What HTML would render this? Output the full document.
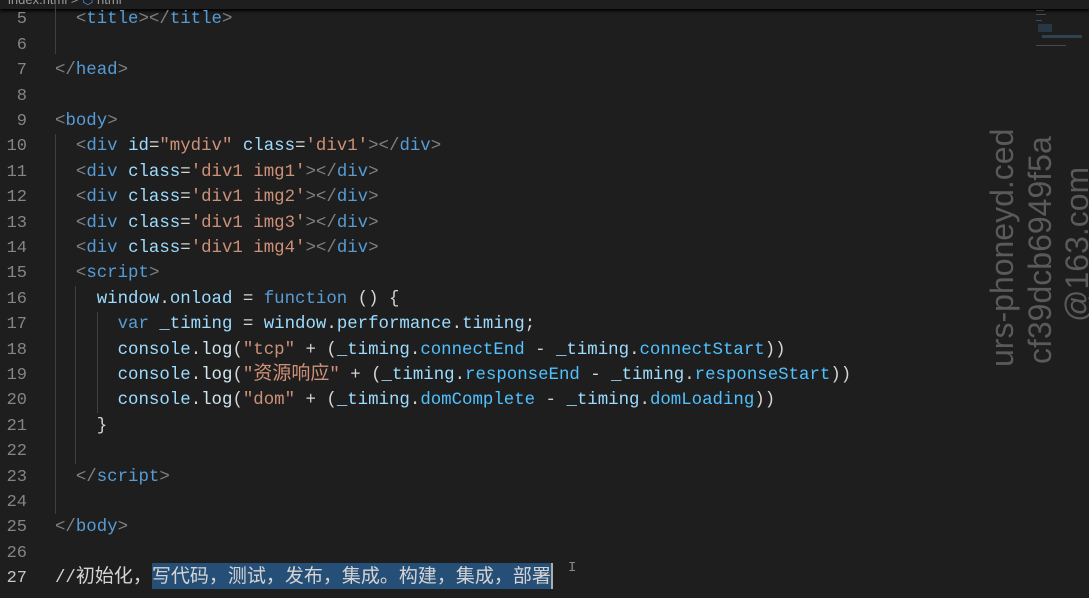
<!DOCTYPE html>
<html><head><meta charset="utf-8"><style>
html,body{margin:0;padding:0;width:1089px;height:598px;overflow:hidden;background:#1e1e1e;}
.ln{position:absolute;left:0;width:27px;text-align:right;color:#858585;font:17px "Liberation Mono",monospace;height:25.4px;line-height:25.4px;margin-top:3px;}
.c{position:absolute;left:55px;white-space:pre;color:#d4d4d4;font:17.4px "Liberation Mono","Noto Sans CJK SC",monospace;height:25.4px;line-height:25.4px;margin-top:3px;}
.z{font-family:"Noto Sans CJK SC",sans-serif;font-size:19px;line-height:10px;}
.b{color:#808080}.t{color:#569cd6}.a{color:#9cdcfe}.s{color:#ce9178}.p{color:#4fc1ff}.k{color:#569cd6}.v{color:#9cdcfe}.f{color:#cfe6ee}
.g{position:absolute;width:1px;background:#404040;}
.wm{position:absolute;color:#5a5a5a;font:32px "Liberation Sans",sans-serif;transform:rotate(-90deg);transform-origin:left top;white-space:nowrap;}
</style></head><body>
<div style="position:absolute;left:0;top:0;width:1089px;height:9px;background:#1e1e1e;box-shadow:0 2px 3px #000;"></div>
<div style="position:absolute;left:8px;top:-8px;color:#999;font:13px 'Liberation Sans';">index.html &gt; <span style="color:#4a8ad6">⬡</span> html</div>
<div class="g" style="left:55px;top:4px;height:50px"></div>
<div class="g" style="left:55px;top:134px;height:380px"></div>
<div class="g" style="left:75px;top:286px;height:178px"></div>
<div class="g" style="left:97px;top:312px;height:101px"></div>

<div class="ln" style="top:4.3px">5</div><div class="c" style="top:4.3px">  <span class="b">&lt;</span><span class="t">title</span><span class="b">&gt;&lt;/</span><span class="t">title</span><span class="b">&gt;</span></div>
<div class="ln" style="top:29.7px">6</div>
<div class="ln" style="top:55.1px">7</div><div class="c" style="top:55.1px"><span class="b">&lt;/</span><span class="t">head</span><span class="b">&gt;</span></div>
<div class="ln" style="top:80.5px">8</div>
<div class="ln" style="top:105.9px">9</div><div class="c" style="top:105.9px"><span class="b">&lt;</span><span class="t">body</span><span class="b">&gt;</span></div>
<div class="ln" style="top:131.3px">10</div><div class="c" style="top:131.3px">  <span class="b">&lt;</span><span class="t">div</span> <span class="a">id</span>=<span class="s">"mydiv"</span> <span class="a">class</span>=<span class="s">'div1'</span><span class="b">&gt;&lt;/</span><span class="t">div</span><span class="b">&gt;</span></div>
<div class="ln" style="top:156.7px">11</div><div class="c" style="top:156.7px">  <span class="b">&lt;</span><span class="t">div</span> <span class="a">class</span>=<span class="s">'div1 img1'</span><span class="b">&gt;&lt;/</span><span class="t">div</span><span class="b">&gt;</span></div>
<div class="ln" style="top:182.1px">12</div><div class="c" style="top:182.1px">  <span class="b">&lt;</span><span class="t">div</span> <span class="a">class</span>=<span class="s">'div1 img2'</span><span class="b">&gt;&lt;/</span><span class="t">div</span><span class="b">&gt;</span></div>
<div class="ln" style="top:207.5px">13</div><div class="c" style="top:207.5px">  <span class="b">&lt;</span><span class="t">div</span> <span class="a">class</span>=<span class="s">'div1 img3'</span><span class="b">&gt;&lt;/</span><span class="t">div</span><span class="b">&gt;</span></div>
<div class="ln" style="top:232.9px">14</div><div class="c" style="top:232.9px">  <span class="b">&lt;</span><span class="t">div</span> <span class="a">class</span>=<span class="s">'div1 img4'</span><span class="b">&gt;&lt;/</span><span class="t">div</span><span class="b">&gt;</span></div>
<div class="ln" style="top:258.3px">15</div><div class="c" style="top:258.3px">  <span class="b">&lt;</span><span class="t">script</span><span class="b">&gt;</span></div>
<div class="ln" style="top:283.7px">16</div><div class="c" style="top:283.7px">    <span class="v">window</span>.<span class="v">onload</span> = <span class="k">function</span> () {</div>
<div class="ln" style="top:309.1px">17</div><div class="c" style="top:309.1px">      <span class="k">var</span> <span class="v">_timing</span> = <span class="v">window</span>.<span class="v">performance</span>.<span class="v">timing</span>;</div>
<div class="ln" style="top:334.5px">18</div><div class="c" style="top:334.5px">      <span class="v">console</span>.<span class="f">log</span>(<span class="s">"tcp"</span> + (<span class="v">_timing</span>.<span class="p">connectEnd</span> - <span class="v">_timing</span>.<span class="p">connectStart</span>))</div>
<div class="ln" style="top:359.9px">19</div><div class="c" style="top:359.9px">      <span class="v">console</span>.<span class="f">log</span>(<span class="s">"<span class="z">资源响应</span>"</span> + (<span class="v">_timing</span>.<span class="p">responseEnd</span> - <span class="v">_timing</span>.<span class="p">responseStart</span>))</div>
<div class="ln" style="top:385.3px">20</div><div class="c" style="top:385.3px">      <span class="v">console</span>.<span class="f">log</span>(<span class="s">"dom"</span> + (<span class="v">_timing</span>.<span class="p">domComplete</span> - <span class="v">_timing</span>.<span class="p">domLoading</span>))</div>
<div class="ln" style="top:410.7px">21</div><div class="c" style="top:410.7px">    }</div>
<div class="ln" style="top:436.1px">22</div>
<div class="ln" style="top:461.5px">23</div><div class="c" style="top:461.5px">  <span class="b">&lt;/</span><span class="t">script</span><span class="b">&gt;</span></div>
<div class="ln" style="top:486.9px">24</div>
<div class="ln" style="top:512.3px">25</div><div class="c" style="top:512.3px"><span class="b">&lt;/</span><span class="t">body</span><span class="b">&gt;</span></div>
<div class="ln" style="top:537.7px">26</div>
<div style="position:absolute;left:152px;top:563px;width:400px;height:26px;background:#264f78;"></div>
<div style="position:absolute;left:551px;top:563px;width:2px;height:26px;background:#aeafad;"></div>
<div class="ln" style="top:563.1px;color:#c6c6c6">27</div><div class="c" style="top:563.1px;color:#d4d4d4">//<span class="z" style="font-size:19px;">初始化，写代码，测试，发布，集成。构建，集成，部署</span></div>
<div style="position:absolute;left:568px;top:560px;color:#888;font:14px 'Liberation Mono'">I</div>
<div style="position:absolute;left:1034px;top:8px;width:50px;height:42px;opacity:0.4;">
<div style="position:absolute;left:2px;top:2px;width:8px;height:1px;background:#888"></div>
<div style="position:absolute;left:2px;top:6px;width:10px;height:1px;background:#888"></div>
<div style="position:absolute;left:2px;top:12px;width:6px;height:1px;background:#569cd6"></div>
<div style="position:absolute;left:4px;top:16px;width:14px;height:8px;background:#3a5a7a"></div>
<div style="position:absolute;left:8px;top:27px;width:40px;height:3px;background:#4a7a9a"></div>
<div style="position:absolute;left:2px;top:37px;width:30px;height:1px;background:#888"></div>
</div>
<div class="wm" style="left:984px;top:367px;">urs-phoneyd.ced</div>
<div class="wm" style="left:1022px;top:364px;">cf39dcb6949f5a</div>
<div class="wm" style="left:1059px;top:322px;">@163.com</div>
</body></html>
